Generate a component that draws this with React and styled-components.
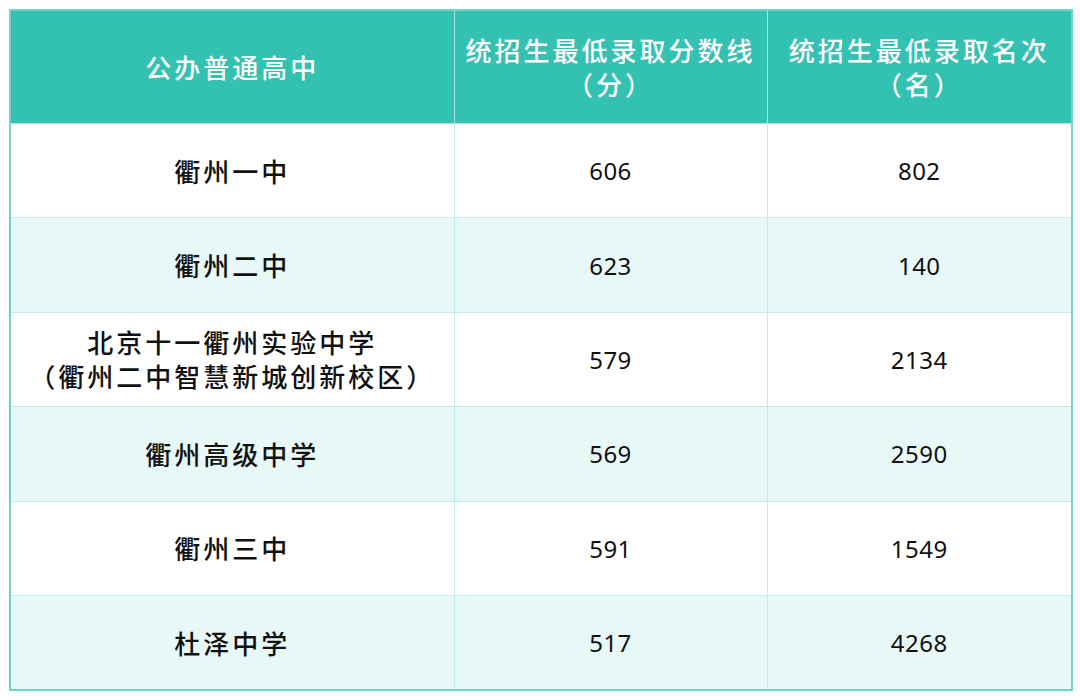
import styled, { createGlobalStyle } from 'styled-components';

const GlobalStyle = createGlobalStyle`
  html, body {
    margin: 0;
    padding: 0;
    background: #ffffff;
  }
  body {
    font-family: "Noto Sans CJK SC", "Noto Sans", sans-serif;
  }
`;

const Page = styled.div`
  padding: 9px 9px 0 9px;
  width: 1062px;
`;

const Table = styled.table`
  width: 1062px;
  border-collapse: collapse;
  border: 2px solid #72d3c7;
  table-layout: fixed;
`;

const HeadCell = styled.th`
  height: 112px;
  padding: 0;
  background: #33c1b2;
  color: #ffffff;
  font-size: 26px;
  font-weight: 500;
  letter-spacing: 3px;
  line-height: 34px;
  text-align: center;
  border-left: 1px solid #a9e8e0;
  border-bottom: 1px solid #a9e8e0;
  &:first-child { border-left: none; }
`;

const Row = styled.tr`
  background: ${(p) => (p.$shade ? '#e8f8f7' : '#ffffff')};
`;

const NameCell = styled.td`
  height: 93.4px;
  padding: 0;
  text-align: center;
  color: #111111;
  font-size: 26px;
  font-weight: 500;
  letter-spacing: 3px;
  line-height: 34px;
  border-bottom: 1px solid #bfeee8;
`;

const NumCell = styled.td`
  padding: 0;
  text-align: center;
  color: #111111;
  font-family: "Noto Sans", sans-serif;
  font-size: 24px;
  letter-spacing: 0.5px;
  border-left: 1px solid #bfeee8;
  border-bottom: 1px solid #bfeee8;
`;

const rows = [
  { name: ['衢州一中'], score: '606', rank: '802' },
  { name: ['衢州二中'], score: '623', rank: '140' },
  { name: ['北京十一衢州实验中学', '（衢州二中智慧新城创新校区）'], score: '579', rank: '2134' },
  { name: ['衢州高级中学'], score: '569', rank: '2590' },
  { name: ['衢州三中'], score: '591', rank: '1549' },
  { name: ['杜泽中学'], score: '517', rank: '4268' },
];

export default function App() {
  return (
    <>
      <GlobalStyle />
      <Page>
        <Table>
          <colgroup>
            <col style={{ width: '444px' }} />
            <col style={{ width: '313px' }} />
            <col style={{ width: '305px' }} />
          </colgroup>
          <thead>
            <tr>
              <HeadCell>公办普通高中</HeadCell>
              <HeadCell>统招生最低录取分数线<br />（分）</HeadCell>
              <HeadCell>统招生最低录取名次<br />（名）</HeadCell>
            </tr>
          </thead>
          <tbody>
            {rows.map((r, i) => (
              <Row key={r.score} $shade={i % 2 === 1}>
                <NameCell>
                  {r.name.map((line, j) => (
                    <div key={j}>{line}</div>
                  ))}
                </NameCell>
                <NumCell>{r.score}</NumCell>
                <NumCell>{r.rank}</NumCell>
              </Row>
            ))}
          </tbody>
        </Table>
      </Page>
    </>
  );
}
